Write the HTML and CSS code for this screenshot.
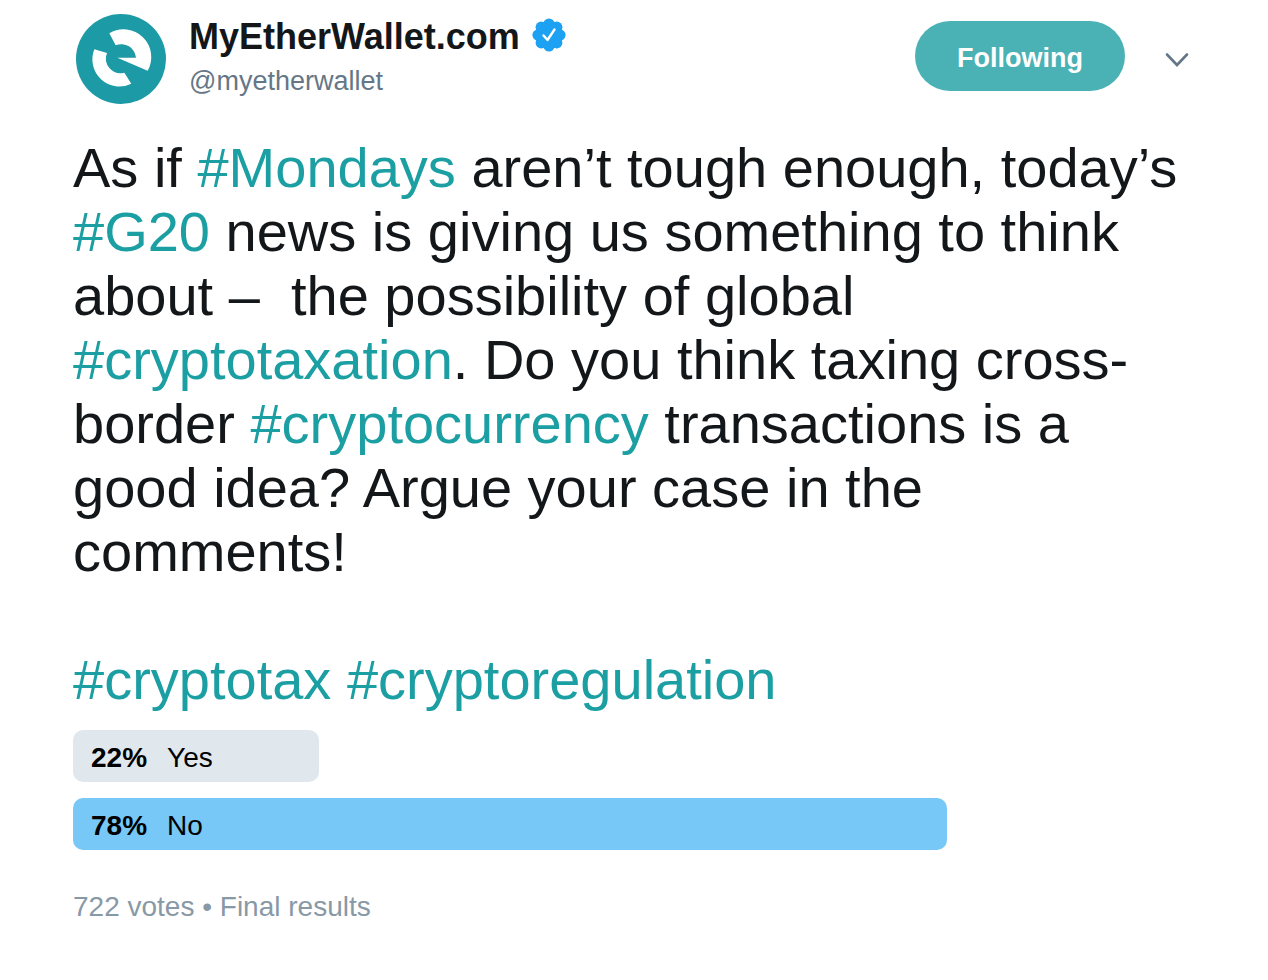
FILE: index.html
```html
<!DOCTYPE html>
<html lang="en">
<head>
  <meta charset="UTF-8">
  <meta name="viewport" content="width=device-width, initial-scale=1.0">
  <title>MyEtherWallet.com</title>
  <link rel="stylesheet" href="styles.css">
</head>
<body>
  <article class="tweet">
    <header class="tweet-header">
      <svg class="avatar" viewBox="0 0 276 276" aria-hidden="true">
        <circle cx="138" cy="138" r="135" fill="#1c9aa6"/>
        <path d="M103 61 A83 83 0 0 1 218 173 L127 134 L183 134 A44 44 0 0 0 122 97 Z" fill="#fff"/>
        <path d="M58 109 A81 81 0 0 0 169 212 L148 179 A44 44 0 0 1 96 120 Z" fill="#fff"/>
      </svg>

      <div class="account">
        <div class="name-row">
          <a class="name" href="#">MyEtherWallet.com</a>
          <svg class="verified" viewBox="0 0 34 34" role="img" aria-label="Verified account">
            <g fill="#1da1f2">
              <circle cx="17" cy="17" r="14"/>
              <circle cx="17" cy="6" r="5.6"/>
              <circle cx="24.8" cy="9.2" r="5.6"/>
              <circle cx="28" cy="17" r="5.6"/>
              <circle cx="24.8" cy="24.8" r="5.6"/>
              <circle cx="17" cy="28" r="5.6"/>
              <circle cx="9.2" cy="24.8" r="5.6"/>
              <circle cx="6" cy="17" r="5.6"/>
              <circle cx="9.2" cy="9.2" r="5.6"/>
            </g>
            <path d="M11.5 17.5 L15.5 22 L22.5 11.5" fill="none" stroke="#fff" stroke-width="2.4" stroke-linecap="round" stroke-linejoin="round"/>
          </svg>
        </div>
        <a class="handle" href="#">@myetherwallet</a>
      </div>

      <button class="follow-btn" type="button">Following</button>
      <button class="more-btn" type="button" aria-label="More">
        <svg viewBox="0 0 32 32" aria-hidden="true">
          <path d="M6 11.5 L16 22 L26 11.5" fill="none" stroke="#657786" stroke-width="2.6" stroke-linecap="round"/>
        </svg>
      </button>
    </header>

    <p class="tweet-text">As if <a href="#">#Mondays</a> aren’t tough enough, today’s <a href="#">#G20</a> news is giving us something to think about –&nbsp; the possibility of global <a href="#">#cryptotaxation</a>. Do you think taxing cross-border <a href="#">#cryptocurrency</a> transactions is a good idea? Argue your case in the comments!<br><br><a href="#">#cryptotax</a> <a href="#">#cryptoregulation</a></p>

    <ul class="poll">
      <li class="choice" style="width: 22%"><strong>22%</strong><span>Yes</span></li>
      <li class="choice winner" style="width: 78%"><strong>78%</strong><span>No</span></li>
    </ul>

    <footer class="poll-info">722 votes • Final results</footer>
  </article>
</body>
</html>
```

FILE: styles.css
```css
* {
  box-sizing: border-box;
}
body {
  margin: 0;
  background: #fff;
  color: #14171a;
  font-family: "Liberation Sans", Arial, sans-serif;
}
a {
  color: inherit;
  text-decoration: none;
}
button {
  border: none;
  font-family: inherit;
  cursor: pointer;
}
.tweet {
  padding: 13px 75px 32px 73px;
}

/* Header */
.tweet-header {
  display: flex;
  align-items: flex-start;
}
.avatar {
  width: 92px;
  height: 92px;
  margin: 0 22px 0 2px;
}
.account {
  flex: 1;
  display: flex;
  flex-direction: column;
}
.name-row {
  display: flex;
  align-items: center;
  gap: 12px;
}
.name {
  font-size: 36px;
  line-height: 48px;
  font-weight: bold;
}
.verified {
  width: 34px;
  height: 34px;
  margin-bottom: 4px;
}
.handle {
  color: #657786;
  font-size: 27px;
  line-height: 40px;
}
.follow-btn {
  width: 210px;
  height: 70px;
  margin: 8px 36px 0 0;
  padding: 4px 0 0;
  border-radius: 35px;
  background: #4ab1b5;
  color: #fff;
  font-size: 27px;
  font-weight: bold;
}
.more-btn {
  width: 32px;
  height: 32px;
  margin-top: 30px;
  padding: 0;
  background: none;
}
.more-btn svg {
  display: block;
}

/* Text */
.tweet-text {
  margin: 31px 0 18px;
  font-size: 56px;
  line-height: 64px;
}
.tweet-text a {
  color: #1c9fa3;
}

/* Poll */
.poll {
  display: flex;
  flex-direction: column;
  gap: 16px;
  margin: 0;
  padding: 0;
  list-style: none;
}
.choice {
  display: flex;
  gap: 20px;
  padding: 4px 18px 0;
  border-radius: 10px;
  background: #e1e8ed;
  color: #000;
  font-size: 28px;
  line-height: 48px;
}
.winner {
  background: #77c7f7;
}
.poll-info {
  margin-top: 37px;
  color: #8899a6;
  font-size: 28px;
  line-height: 40px;
}
```
